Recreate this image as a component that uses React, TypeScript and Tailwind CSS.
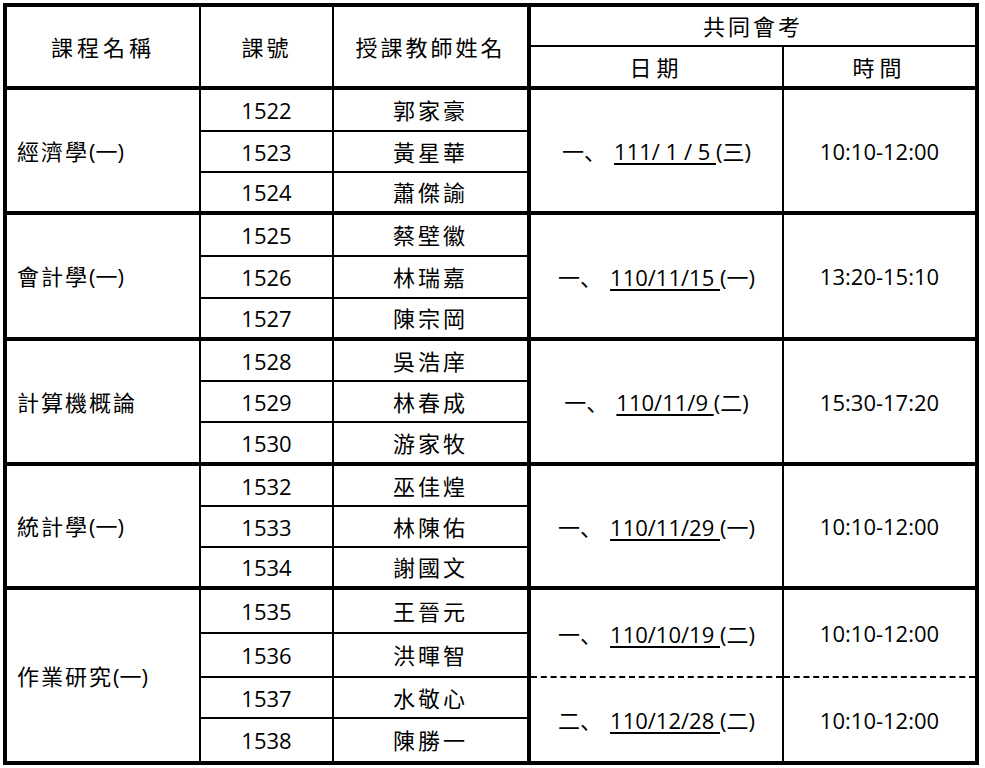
import React from "react";

type DateInfo = { label: string; date: string; day: string; time: string };
type Group = {
  name: React.ReactNode;
  rows: { no: string; teacher: string; h: string }[];
  dates: DateInfo[];
};

const groups: Group[] = [
  {
    name: (
      <>
        <span className="tracking-[2px]">經濟學</span>(一)
      </>
    ),
    rows: [
      { no: "1522", teacher: "郭家豪", h: "h-[43px]" },
      { no: "1523", teacher: "黃星華", h: "h-[41px]" },
      { no: "1524", teacher: "蕭傑諭", h: "h-[41px]" },
    ],
    dates: [{ label: "一", date: "111/ 1 / 5 ", day: "(三)", time: "10:10-12:00" }],
  },
  {
    name: (
      <>
        <span className="tracking-[2px]">會計學</span>(一)
      </>
    ),
    rows: [
      { no: "1525", teacher: "蔡壁徽", h: "h-[43px]" },
      { no: "1526", teacher: "林瑞嘉", h: "h-[42px]" },
      { no: "1527", teacher: "陳宗岡", h: "h-[41px]" },
    ],
    dates: [{ label: "一", date: "110/11/15 ", day: "(一)", time: "13:20-15:10" }],
  },
  {
    name: <span className="tracking-[2px]">計算機概論</span>,
    rows: [
      { no: "1528", teacher: "吳浩庠", h: "h-[42px]" },
      { no: "1529", teacher: "林春成", h: "h-[41px]" },
      { no: "1530", teacher: "游家牧", h: "h-[42px]" },
    ],
    dates: [{ label: "一", date: "110/11/9 ", day: "(二)", time: "15:30-17:20" }],
  },
  {
    name: (
      <>
        <span className="tracking-[2px]">統計學</span>(一)
      </>
    ),
    rows: [
      { no: "1532", teacher: "巫佳煌", h: "h-[42px]" },
      { no: "1533", teacher: "林陳佑", h: "h-[41px]" },
      { no: "1534", teacher: "謝國文", h: "h-[41px]" },
    ],
    dates: [{ label: "一", date: "110/11/29 ", day: "(一)", time: "10:10-12:00" }],
  },
  {
    name: (
      <>
        <span className="tracking-[2px]">作業研究</span>(一)
      </>
    ),
    rows: [
      { no: "1535", teacher: "王晉元", h: "h-[45px]" },
      { no: "1536", teacher: "洪暉智", h: "h-[44px]" },
      { no: "1537", teacher: "水敬心", h: "h-[41px]" },
      { no: "1538", teacher: "陳勝一", h: "h-[45px]" },
    ],
    dates: [
      { label: "一", date: "110/10/19 ", day: "(二)", time: "10:10-12:00" },
      { label: "二", date: "110/12/28 ", day: "(二)", time: "10:10-12:00" },
    ],
  },
];

function DateText({ d }: { d: DateInfo }) {
  return (
    <span className="whitespace-pre">
      <span>{d.label}</span>
      <span className="font-['Noto_Sans_CJK_SC',sans-serif] mr-[8px]">、</span>
      <span className="underline decoration-2 underline-offset-[3px]">{d.date}</span>
      <span>{d.day}</span>
    </span>
  );
}

export default function App() {
  return (
    <div className="bg-white w-[985px] h-[768px] pt-[3px] pl-[3px] text-black font-['Open_Sans','Noto_Sans_CJK_TC',sans-serif] text-[22px] leading-none">
      <table className="border-collapse table-fixed w-[972px] border-4 border-black">
        <colgroup>
          <col className="w-[195px]" />
          <col className="w-[133px]" />
          <col className="w-[196px]" />
          <col className="w-[254px]" />
          <col className="w-[194px]" />
        </colgroup>
        <thead>
          <tr className="h-[41px]">
            <th rowSpan={2} className="border-2 border-b-4 border-black font-normal tracking-[4px] align-middle">
              課程名稱
            </th>
            <th rowSpan={2} className="border-2 border-b-4 border-black font-normal tracking-[3px] align-middle">
              課號
            </th>
            <th rowSpan={2} className="border-2 border-b-4 border-r-4 border-black font-normal tracking-[3px] align-middle">
              授課教師姓名
            </th>
            <th colSpan={2} className="border-2 border-black font-normal tracking-[3px] align-middle">
              共同會考
            </th>
          </tr>
          <tr className="h-[42px]">
            <th className="border-2 border-b-4 border-black font-normal tracking-[5px] align-middle">日期</th>
            <th className="border-2 border-b-4 border-black font-normal tracking-[5px] align-middle">時間</th>
          </tr>
        </thead>
        <tbody>
          {groups.map((g, gi) =>
            g.rows.map((r, ri) => {
              const first = ri === 0;
              const top = first ? "border-t-4" : "";
              const perDate = g.rows.length / g.dates.length;
              const dateIdx = Math.floor(ri / perDate);
              const dateStart = ri % perDate === 0;
              const multi = g.dates.length > 1;
              const dashBottom = multi && dateIdx === 0 ? "[border-bottom-style:dashed]" : "";
              const dashTop = multi && dateIdx === 1 ? "[border-top-style:dashed]" : "";
              return (
                <tr key={`${gi}-${ri}`} className={r.h}>
                  {first && (
                    <td rowSpan={g.rows.length} className="border-2 border-t-4 border-black text-left pl-[10px] align-middle">
                      {g.name}
                    </td>
                  )}
                  <td className={`border-2 ${top} border-black text-center align-middle`}>{r.no}</td>
                  <td className={`border-2 ${top} border-r-4 border-black text-center align-middle tracking-[3px]`}>
                    {r.teacher}
                  </td>
                  {dateStart && (
                    <td rowSpan={perDate} className={`border-2 ${top} border-black text-center align-middle ${dashBottom} ${dashTop}`}>
                      <DateText d={g.dates[dateIdx]} />
                    </td>
                  )}
                  {dateStart && (
                    <td rowSpan={perDate} className={`border-2 ${top} border-black text-center align-middle ${dashBottom} ${dashTop}`}>
                      {g.dates[dateIdx].time}
                    </td>
                  )}
                </tr>
              );
            })
          )}
        </tbody>
      </table>
    </div>
  );
}
